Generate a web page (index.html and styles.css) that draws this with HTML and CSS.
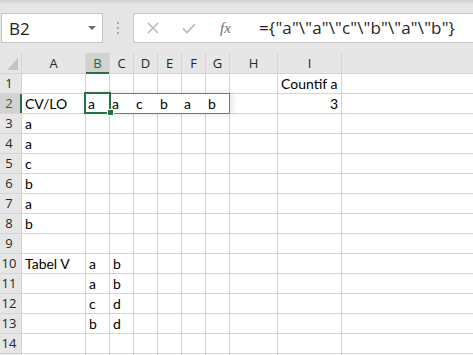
FILE: index.html
```html
<!DOCTYPE html>
<html lang="en">
<head>
    <meta charset="UTF-8">
    <title>Sheet</title>
    <link rel="stylesheet" href="styles.css">
</head>
<body>
    <div class="ribbon-edge"></div>
    <div class="formula-bar">
        <div class="name-box">
            <span class="name-text">B2</span>
            <span class="name-arrow"></span>
        </div>
        <div class="grip"><i></i><i></i><i></i></div>
        <div class="formula-box">
            <div class="fx-buttons">
                <svg class="fx-icon" width="12" height="12" viewBox="0 0 12 12"><path d="M1 1L11 11M11 1L1 11" stroke="#b3b3b3" stroke-width="1.4" fill="none"/></svg>
                <svg class="fx-icon" width="14" height="11" viewBox="0 0 14 11"><path d="M1 5.5L5 9.5L13 1" stroke="#b3b3b3" stroke-width="1.6" fill="none"/></svg>
                <span class="fx-label">fx</span>
            </div>
            <div class="formula-text">={"a"\"a"\"c"\"b"\"a"\"b"}</div>
        </div>
    </div>

    <div class="sheet">
        <div class="row">
            <div class="h corner"><span class="tri"></span></div>
            <div class="h">A</div><div class="h sel">B</div><div class="h">C</div><div class="h">D</div><div class="h">E</div><div class="h">F</div><div class="h">G</div><div class="h">H</div><div class="h">I</div><div class="h"></div>
        </div>
        <div class="row">
            <div class="rh">1</div>
            <div class="c"></div><div class="c"></div><div class="c"></div><div class="c"></div><div class="c"></div><div class="c"></div><div class="c"></div><div class="c"></div><div class="c">Countif a</div><div class="c"></div>
        </div>
        <div class="row">
            <div class="rh sel">2</div>
            <div class="c">CV/LO</div><div class="c"></div><div class="c"></div><div class="c"></div><div class="c"></div><div class="c"></div><div class="c"></div><div class="c"></div><div class="c num">3</div><div class="c"></div>
        </div>
        <div class="row">
            <div class="rh">3</div>
            <div class="c">a</div><div class="c"></div><div class="c"></div><div class="c"></div><div class="c"></div><div class="c"></div><div class="c"></div><div class="c"></div><div class="c"></div><div class="c"></div>
        </div>
        <div class="row">
            <div class="rh">4</div>
            <div class="c">a</div><div class="c"></div><div class="c"></div><div class="c"></div><div class="c"></div><div class="c"></div><div class="c"></div><div class="c"></div><div class="c"></div><div class="c"></div>
        </div>
        <div class="row">
            <div class="rh">5</div>
            <div class="c">c</div><div class="c"></div><div class="c"></div><div class="c"></div><div class="c"></div><div class="c"></div><div class="c"></div><div class="c"></div><div class="c"></div><div class="c"></div>
        </div>
        <div class="row">
            <div class="rh">6</div>
            <div class="c">b</div><div class="c"></div><div class="c"></div><div class="c"></div><div class="c"></div><div class="c"></div><div class="c"></div><div class="c"></div><div class="c"></div><div class="c"></div>
        </div>
        <div class="row">
            <div class="rh">7</div>
            <div class="c">a</div><div class="c"></div><div class="c"></div><div class="c"></div><div class="c"></div><div class="c"></div><div class="c"></div><div class="c"></div><div class="c"></div><div class="c"></div>
        </div>
        <div class="row">
            <div class="rh">8</div>
            <div class="c">b</div><div class="c"></div><div class="c"></div><div class="c"></div><div class="c"></div><div class="c"></div><div class="c"></div><div class="c"></div><div class="c"></div><div class="c"></div>
        </div>
        <div class="row">
            <div class="rh">9</div>
            <div class="c"></div><div class="c"></div><div class="c"></div><div class="c"></div><div class="c"></div><div class="c"></div><div class="c"></div><div class="c"></div><div class="c"></div><div class="c"></div>
        </div>
        <div class="row">
            <div class="rh">10</div>
            <div class="c">Tabel V</div><div class="c">a</div><div class="c">b</div><div class="c"></div><div class="c"></div><div class="c"></div><div class="c"></div><div class="c"></div><div class="c"></div><div class="c"></div>
        </div>
        <div class="row">
            <div class="rh">11</div>
            <div class="c"></div><div class="c">a</div><div class="c">b</div><div class="c"></div><div class="c"></div><div class="c"></div><div class="c"></div><div class="c"></div><div class="c"></div><div class="c"></div>
        </div>
        <div class="row">
            <div class="rh">12</div>
            <div class="c"></div><div class="c">c</div><div class="c">d</div><div class="c"></div><div class="c"></div><div class="c"></div><div class="c"></div><div class="c"></div><div class="c"></div><div class="c"></div>
        </div>
        <div class="row">
            <div class="rh">13</div>
            <div class="c"></div><div class="c">b</div><div class="c">d</div><div class="c"></div><div class="c"></div><div class="c"></div><div class="c"></div><div class="c"></div><div class="c"></div><div class="c"></div>
        </div>
        <div class="row">
            <div class="rh">14</div>
            <div class="c"></div><div class="c"></div><div class="c"></div><div class="c"></div><div class="c"></div><div class="c"></div><div class="c"></div><div class="c"></div><div class="c"></div><div class="c"></div>
        </div>
        <div class="row">
            <div class="rh"></div>
            <div class="c"></div><div class="c"></div><div class="c"></div><div class="c"></div><div class="c"></div><div class="c"></div><div class="c"></div><div class="c"></div><div class="c"></div><div class="c"></div>
        </div>

        <!-- array result floating over B2:G2 -->
        <div class="array-range">
            <span>a</span><span>a</span><span>c</span><span>b</span><span>a</span><span>b</span>
        </div>
        <div class="active-cell"></div>
        <div class="fill-handle"></div>
    </div>
</body>
</html>
```

FILE: styles.css
```css
* {
    margin: 0;
    padding: 0;
    box-sizing: border-box;
}

body {
    width: 473px;
    height: 355px;
    overflow: hidden;
    background: #ffffff;
    font-family: 'Open Sans', 'Noto Sans', sans-serif;
    color: #000;
}

.ribbon-edge {
    height: 3px;
    background: linear-gradient(#d0d0d0, #dedede);
}

.formula-bar {
    height: 50px;
    background: #e6e6e6;
    display: flex;
    align-items: flex-start;
    padding: 10px 0 0 1px;
}

.name-box {
    width: 102px;
    height: 30px;
    background: #fff;
    border: 1px solid #c6c6c6;
    display: flex;
    align-items: center;
    justify-content: space-between;
    padding: 0 6px 0 7px;
}

.name-text {
    font-size: 17px;
    color: #222;
    line-height: 1;
}

.name-arrow {
    width: 0;
    height: 0;
    border-left: 4px solid transparent;
    border-right: 4px solid transparent;
    border-top: 4px solid #6b6b6b;
}

.grip {
    width: 30px;
    height: 30px;
    display: flex;
    flex-direction: column;
    align-items: center;
    justify-content: center;
    gap: 3px;
}

.grip i {
    display: block;
    width: 2px;
    height: 2px;
    background: #a6a6a6;
}

.formula-box {
    flex: 1;
    height: 30px;
    background: #fff;
    border: 1px solid #c6c6c6;
    border-right: none;
    display: flex;
    align-items: center;
}

.fx-buttons {
    width: 125px;
    display: flex;
    align-items: center;
    padding-left: 13px;
}

.fx-buttons svg:nth-child(1) {
    margin-right: 23px;
}

.fx-buttons svg:nth-child(2) {
    margin-right: 24px;
}

.fx-label {
    font-family: 'Liberation Serif', serif;
    font-style: italic;
    font-size: 15px;
    color: #6e6e6e;
}

.formula-text {
    font-size: 17px;
    letter-spacing: 0.15px;
    color: #1f1f1f;
    white-space: nowrap;
    line-height: 1;
    padding-bottom: 2px;
}

.sheet {
    position: relative;
    display: grid;
    grid-template-columns: 21px 63px 23px 23px 23px 23px 23px 23px 47px 63px 1fr;
    grid-template-rows: 20px;
    grid-auto-rows: 19px;
    gap: 1px;
    background: #d4d4d4;
}

.row {
    display: contents;
}

.h {
    background: #e6e6e6;
    font-size: 13px;
    line-height: 20px;
    text-align: center;
    color: #262626;
}

.h.sel {
    background: #d2d2d2;
    color: #1e6b43;
    box-shadow: inset 0 -1px #217346, 0 1px #217346;
}

.corner {
    position: relative;
}

.tri {
    position: absolute;
    right: 3px;
    bottom: 3px;
    width: 11px;
    height: 12px;
    background: #c4c4c4;
    clip-path: polygon(100% 0, 100% 100%, 0 100%);
}

.rh {
    background: #e6e6e6;
    font-size: 13px;
    line-height: 19px;
    text-align: center;
    padding-right: 3px;
    color: #262626;
}

.rh.sel {
    background: #d2d2d2;
    color: #1e6b43;
    box-shadow: inset -1px 0 #217346, 1px 0 #217346;
}

.c {
    background: #fff;
    font-family: 'Lato', 'Open Sans', sans-serif;
    font-size: 14px;
    line-height: 19px;
    padding: 0 3px;
    white-space: nowrap;
}

.c.num {
    text-align: right;
}

.array-range {
    position: absolute;
    left: 85px;
    top: 40px;
    width: 145px;
    height: 21px;
    background: #fff;
    border: 1px solid #4a7bd0;
    box-shadow: 2px 0 6px rgba(0, 0, 0, 0.12);
    display: grid;
    grid-template-columns: repeat(6, 24px);
    font-family: 'Lato', 'Open Sans', sans-serif;
    font-size: 14px;
    line-height: 19px;
}

.array-range span {
    padding-left: 2px;
}

.active-cell {
    position: absolute;
    left: 84px;
    top: 39px;
    width: 27px;
    height: 22px;
    border: 2px solid #217346;
}

.fill-handle {
    position: absolute;
    left: 107px;
    top: 56px;
    width: 7px;
    height: 7px;
    background: #217346;
    border: 1px solid #fff;
}
```
